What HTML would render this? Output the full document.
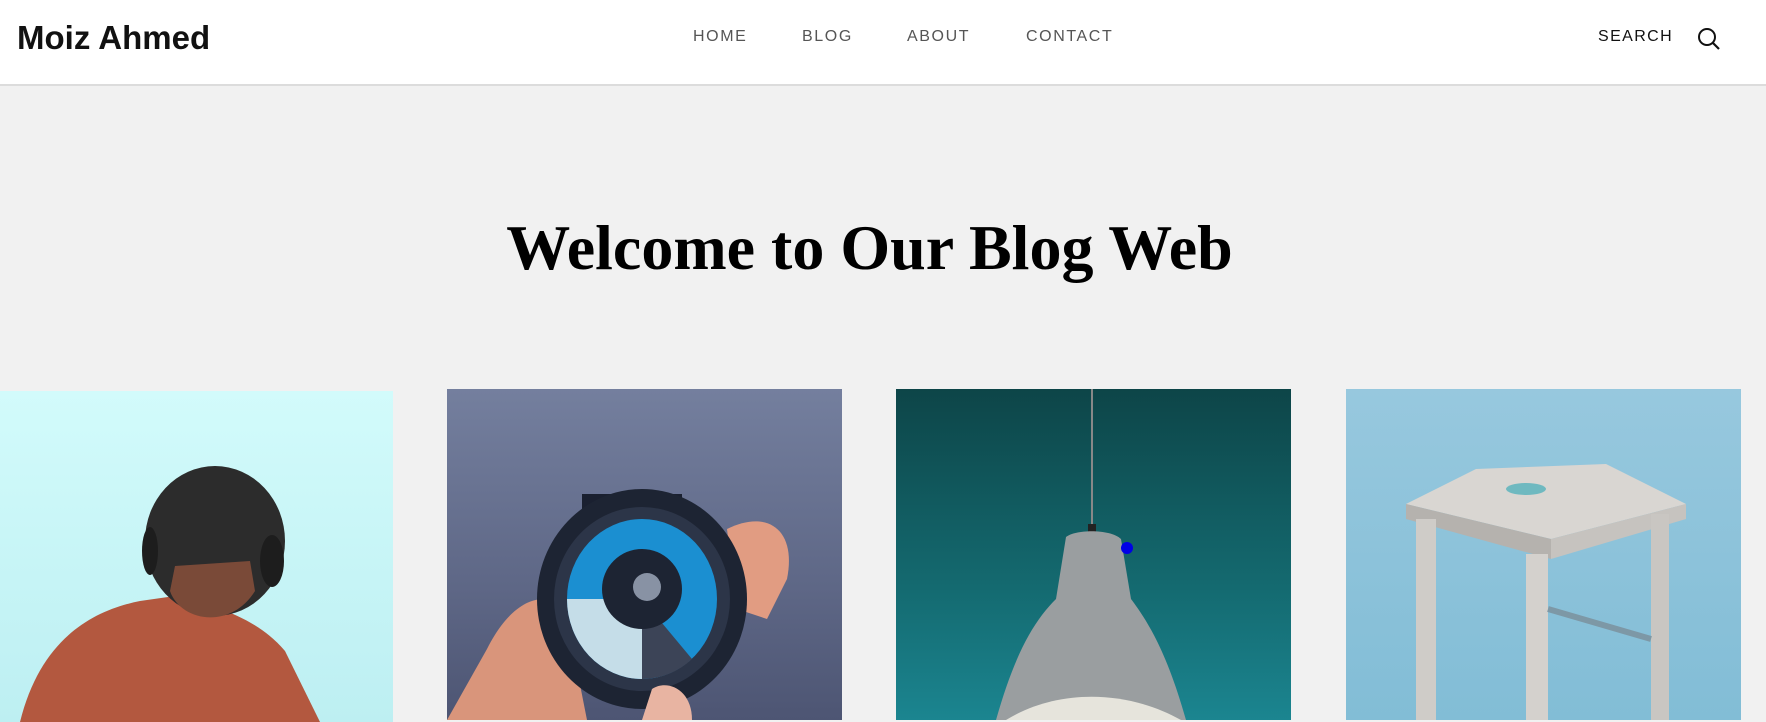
<!DOCTYPE html>
<html><head><meta charset="utf-8"><style>
*{margin:0;padding:0;box-sizing:border-box}
body{width:1766px;height:720px;overflow:hidden;background:#f1f1f1;font-family:"Liberation Sans",sans-serif;position:relative}
header{position:absolute;left:0;top:0;width:1766px;height:86px;background:#fff;border-bottom:2px solid #dcdcdc}
.logo{position:absolute;left:17px;top:19px;font-size:33px;font-weight:bold;color:#111;letter-spacing:0px}
.nav a{position:absolute;top:28px;font-size:16px;color:#555;letter-spacing:1.6px;text-decoration:none}
.search{position:absolute;left:1598px;top:28px;font-size:16px;color:#111;letter-spacing:1.4px}
h1{position:absolute;left:0;width:1739px;text-align:center;top:211px;font-family:"Liberation Serif",serif;font-size:64px;font-weight:bold;color:#000}
.card{position:absolute;top:389px;height:331px;width:395px;overflow:hidden}
</style></head><body>
<header>
<div class="logo">Moiz Ahmed</div>
<div class="nav"><a style="left:693px">HOME</a><a style="left:802px">BLOG</a><a style="left:907px">ABOUT</a><a style="left:1026px">CONTACT</a></div>
<div class="search">SEARCH</div>
<svg style="position:absolute;left:1696px;top:26px" width="26" height="26" viewBox="0 0 26 26"><circle cx="11" cy="11" r="8" fill="none" stroke="#111" stroke-width="2"/><line x1="17" y1="17" x2="23" y2="23" stroke="#111" stroke-width="2.2"/></svg>
</header>
<h1>Welcome to Our Blog Web</h1>

<div class="card" style="left:0;top:391px;width:393px;background:linear-gradient(#d2fbfb,#bdeff2)">
<svg width="393" height="331"><path d="M20 331 C40 250 90 220 140 210 L175 205 C220 215 260 230 285 260 L320 331Z" fill="#b3583f"/><ellipse cx="215" cy="150" rx="70" ry="75" fill="#2c2c2c"/><path d="M170 200 C180 230 230 240 255 200 L250 170 L175 175Z" fill="#7a4a38"/><ellipse cx="272" cy="170" rx="12" ry="26" fill="#1d1d1d"/><ellipse cx="150" cy="160" rx="8" ry="24" fill="#1d1d1d"/></svg>
</div>
<div class="card" style="left:447px;background:linear-gradient(#747f9e,#5e6786 60%,#4d5573)">
<svg width="395" height="331"><path d="M0 331 L40 260 C70 200 110 200 120 230 L140 331Z" fill="#d9957b"/><path d="M280 140 C320 120 350 140 340 190 L320 230 L290 220Z" fill="#e19c82"/><rect x="135" y="105" width="100" height="60" fill="#1a2030"/><ellipse cx="195" cy="210" rx="105" ry="110" fill="#1d2433"/><ellipse cx="195" cy="210" rx="88" ry="92" fill="#2c3548"/><ellipse cx="195" cy="210" rx="75" ry="80" fill="#1b8fd1"/><path d="M195 210 L195 290 A75 80 0 0 1 120 210Z" fill="#c5dde8"/><path d="M195 210 L195 290 A75 80 0 0 0 245 270Z" fill="#3c4457"/><circle cx="195" cy="200" r="40" fill="#1d2433"/><circle cx="200" cy="198" r="14" fill="#8892a4"/><path d="M205 300 C220 290 245 300 245 331 L195 331Z" fill="#e8b4a2"/></svg>
</div>
<div class="card" style="left:896px;background:linear-gradient(#0d4548,#146a70 60%,#1b8590)">
<svg width="396" height="331"><line x1="196" y1="0" x2="196" y2="135" stroke="#888" stroke-width="2"/><rect x="192" y="135" width="8" height="10" fill="#222"/><path d="M170 148 C180 140 215 140 225 150 L235 210 C250 230 270 260 290 331 L100 331 C120 260 140 230 160 210Z" fill="#9a9ea0"/><path d="M110 331 C160 300 230 300 285 331Z" fill="#e6e4dc"/><circle cx="231" cy="159" r="6" fill="#0000e6"/></svg>
</div>
<div class="card" style="left:1346px;background:linear-gradient(#97c8de,#82bdd6)">
<svg width="395" height="331"><path d="M130 80 L260 75 L340 115 L205 150 L60 115Z" fill="#d9d6d2"/><path d="M60 115 L205 150 L205 170 L60 130Z" fill="#b5b2ae"/><path d="M205 150 L340 115 L340 130 L205 170Z" fill="#c6c3bf"/><rect x="70" y="130" width="20" height="201" fill="#cfccc8"/><rect x="180" y="165" width="22" height="166" fill="#d4d1cd"/><rect x="305" y="125" width="18" height="206" fill="#c9c6c2"/><line x1="202" y1="220" x2="305" y2="250" stroke="#7d98a6" stroke-width="6"/><ellipse cx="180" cy="100" rx="20" ry="6" fill="#6fb9c0"/></svg>
</div>
</body></html>
